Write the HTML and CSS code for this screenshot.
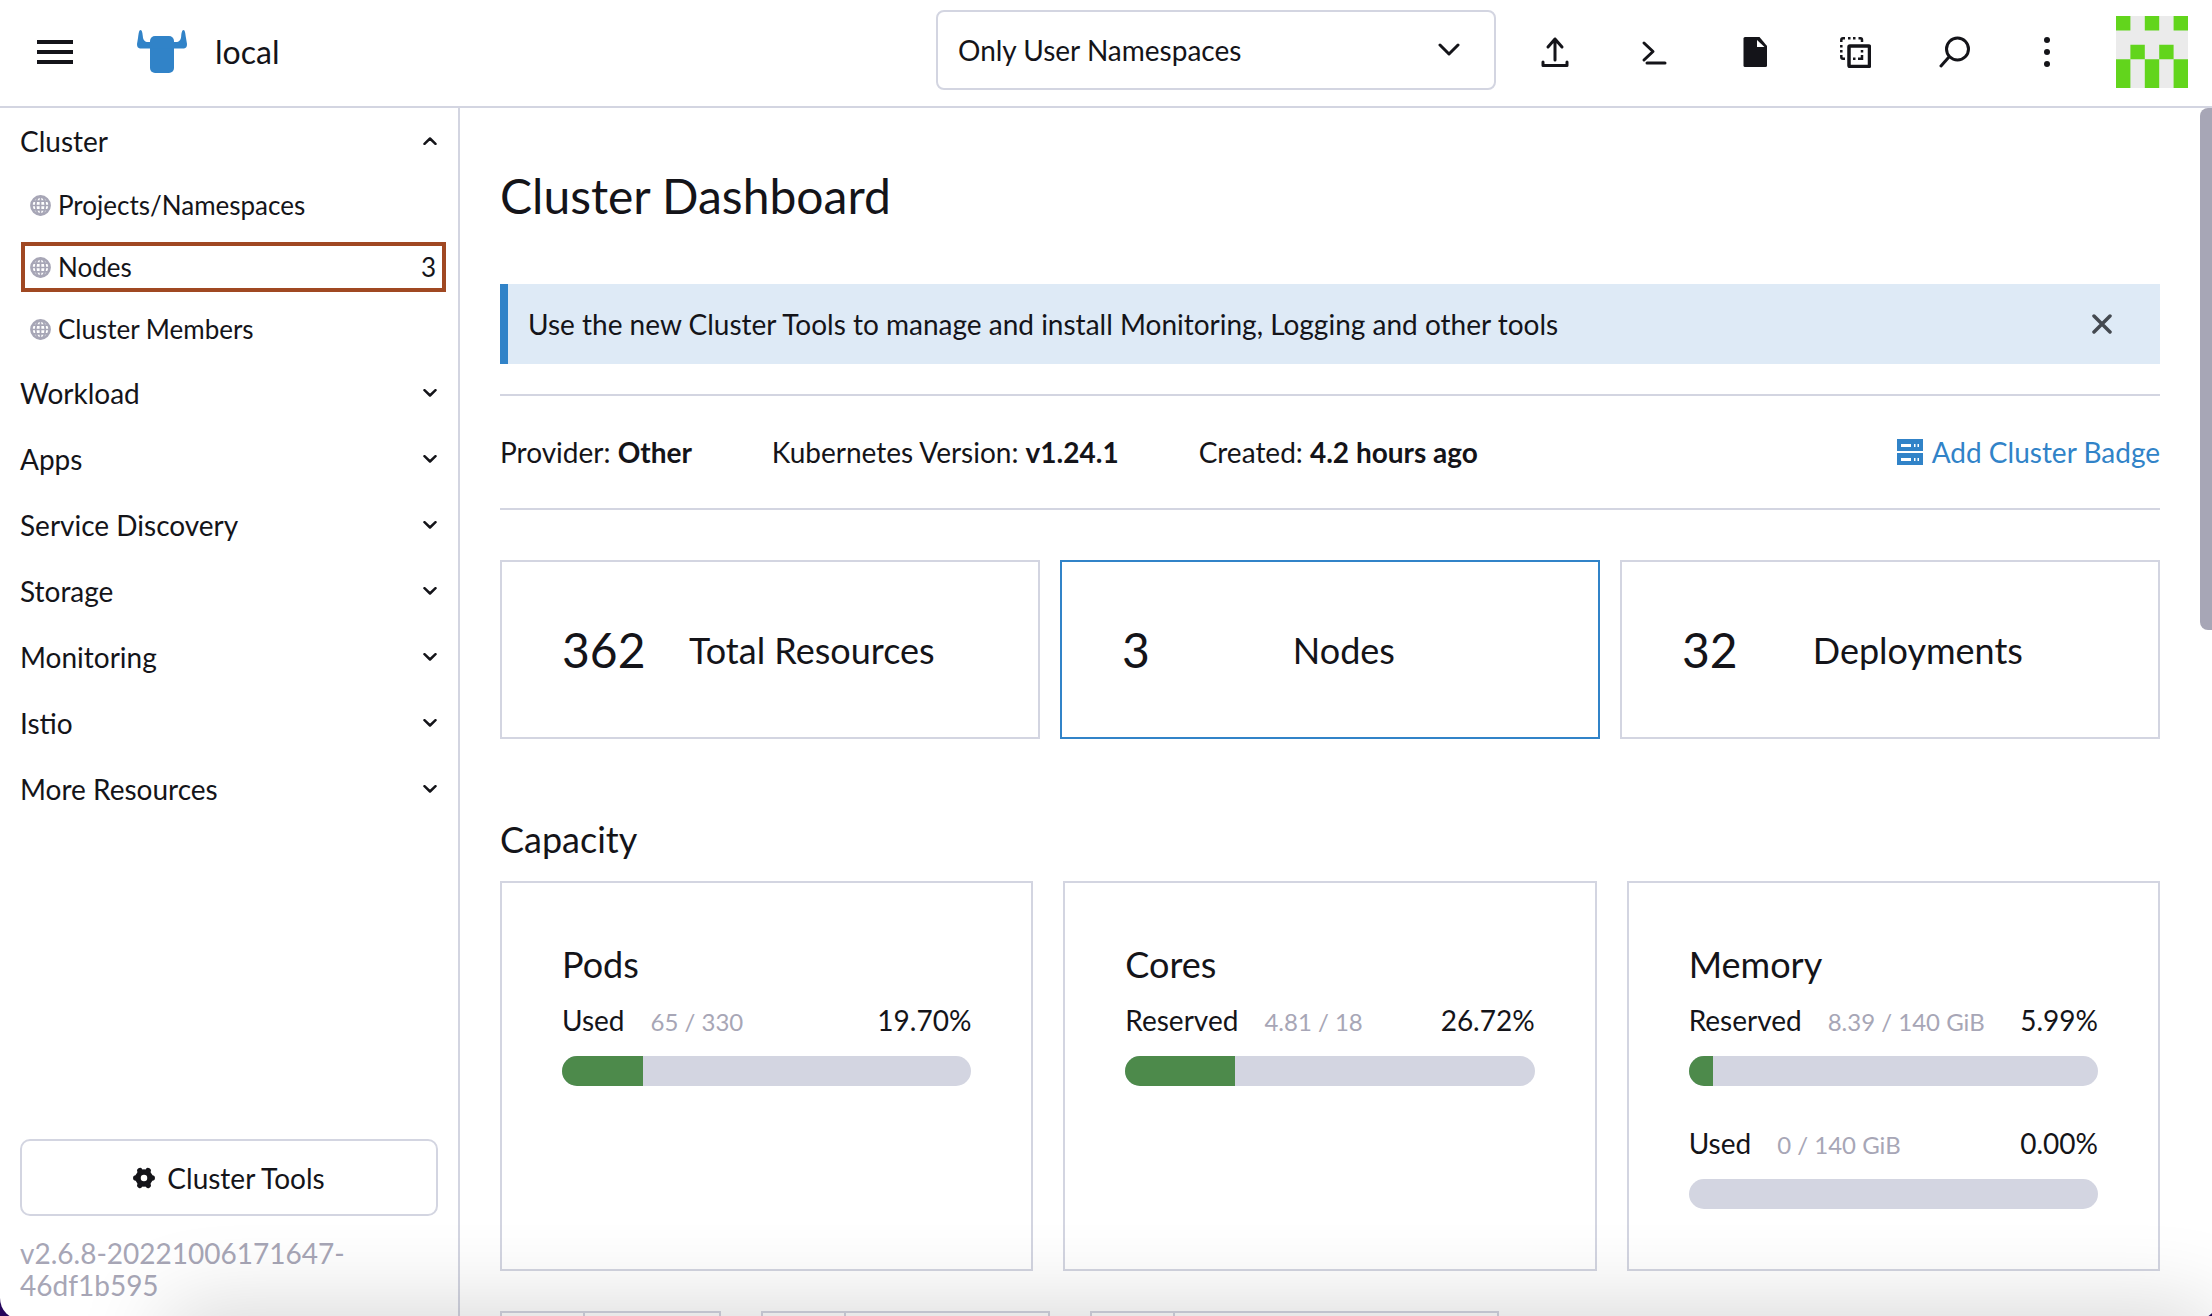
FILE: index.html
```html
<!DOCTYPE html>
<html lang="en">
<head>
<meta charset="utf-8">
<title>Cluster Dashboard</title>
<link rel="stylesheet" href="styles.css">
</head>
<body>
<header class="topbar">
  <button class="icon-btn menu-btn" aria-label="Menu"><svg width="36" height="24" viewBox="0 0 36 24"><path d="M0 2H36M0 12H36M0 22H36" stroke="currentColor" stroke-width="4"/></svg></button>
  <a class="brand" href="#">
    <svg width="50" height="44" viewBox="0 0 50 44" fill="#3183c8"><rect x="13" y="6" width="24" height="37" rx="5"/><path d="M3.500 0C5 0 5.500 3 5.800 6C6 10 8 12 11 12H39C42 12 44 10 44.200 6C44.500 3 45 0 46.500 0C48 0 48.300 3 49 8L50 14C50 17 49 18 47 18.500H3C1 18 0 17 0 14L1 8C1.700 3 2 0 3.500 0Z"/></svg>
    <span>local</span>
  </a>
  <button class="ns-select" aria-haspopup="listbox"><span>Only User Namespaces</span><svg width="22" height="14" viewBox="0 0 22 14"><path d="M2 2L11 11L20 2" fill="none" stroke="currentColor" stroke-width="3" stroke-linecap="round" stroke-linejoin="round"/></svg></button>
  <nav class="tools" aria-label="Tools">
    <button class="icon-btn" aria-label="Import YAML"><svg width="32" height="32" viewBox="0 0 32 32" fill="none" stroke="currentColor" stroke-width="3" stroke-linecap="round" stroke-linejoin="round"><path d="M16 24V3M9 11L16 3L23 11M4 26V29.500H28V26"/></svg></button>
    <button class="icon-btn" aria-label="Kubectl shell"><svg width="32" height="32" viewBox="0 0 32 32" fill="none" stroke="currentColor" stroke-width="3" stroke-linecap="round" stroke-linejoin="round"><path d="M5 7L14 15.500L5 24M8 27H26"/></svg></button>
    <button class="icon-btn" aria-label="Download KubeConfig"><svg width="32" height="32" viewBox="0 0 32 32" fill="currentColor"><path d="M6 1H20.500L28 10V29.500Q28 31 26.500 31H6Q4.500 31 4.500 29.500V2.500Q4.500 1 6 1Z"/><path fill="#fff" d="M18 4L25.500 11H18Z"/></svg></button>
    <button class="icon-btn" aria-label="Copy KubeConfig"><svg width="32" height="32" viewBox="0 0 32 32" fill="none" stroke="currentColor"><path stroke-width="2.500" d="M2.300 6V4Q2.300 2.300 4 2.300H6M9 2.300H11.500M14 2.300H16.500M19.500 2.300H21.500Q23 2.300 23 4V6M2.300 9V11.500M2.300 14V16.500M2.300 19V21Q2.300 22.700 4 22.700H6M23 14V16.500M23 19V22.700H19M14 22.700H16.500"/><rect x="10" y="10" width="20.500" height="20.500" rx="1" stroke-width="3.500"/></svg></button>
    <button class="icon-btn" aria-label="Resource search"><svg width="32" height="32" viewBox="0 0 32 32" fill="none" stroke="currentColor" stroke-width="3" stroke-linecap="round"><circle cx="18.500" cy="13" r="11"/><path d="M9.500 21.500L2 30"/></svg></button>
    <button class="icon-btn more-btn" aria-label="More"><svg width="6" height="32" viewBox="0 0 6 32" fill="currentColor"><circle cx="3" cy="4" r="3"/><circle cx="3" cy="16" r="3"/><circle cx="3" cy="28" r="3"/></svg></button>
  </nav>
  <button class="icon-btn avatar" aria-label="User"><svg width="72" height="72" viewBox="0 0 5 5"><path fill="#ebebeb" d="M0 0H5V5H0Z"/><path fill="#62d51c" d="M0 0H1V1H0ZM2 0H3V1H2ZM4 0H5V1H4ZM1 2H2V3H1ZM3 2H4V3H3ZM0 3H1V5H0ZM2 3H3V5H2ZM4 3H5V5H4Z"/></svg></button>
</header>

<svg class="defs" aria-hidden="true">
  <symbol id="chev" viewBox="0 0 14 8"><path d="M1.500 1.200L7 6.500L12.500 1.200" fill="none" stroke="currentColor" stroke-width="2.500" stroke-linecap="round" stroke-linejoin="round"/></symbol>
  <symbol id="globe" viewBox="0 0 22 22"><g fill="none" stroke="currentColor"><circle cx="11" cy="11" r="9.500" stroke-width="2.800"/><ellipse cx="11" cy="11" rx="5" ry="9.500" stroke-width="1.800"/><path stroke-width="1.800" d="M11 1V21M1 11H21M3 6.500H19M3 15.500H19"/></g></symbol>
</svg>

<div class="layout">
  <aside class="sidebar">
    <nav class="groups" aria-label="Cluster navigation">
      <button class="group" aria-expanded="true">Cluster<svg class="chev up"><use href="#chev"/></svg></button>
      <a class="item" href="#"><svg class="globe"><use href="#globe"/></svg>Projects/Namespaces</a>
      <a class="item marked" href="#"><svg class="globe"><use href="#globe"/></svg>Nodes<span class="count">3</span></a>
      <a class="item" href="#"><svg class="globe"><use href="#globe"/></svg>Cluster Members</a>
      <button class="group">Workload<svg class="chev"><use href="#chev"/></svg></button>
      <button class="group">Apps<svg class="chev"><use href="#chev"/></svg></button>
      <button class="group">Service Discovery<svg class="chev"><use href="#chev"/></svg></button>
      <button class="group">Storage<svg class="chev"><use href="#chev"/></svg></button>
      <button class="group">Monitoring<svg class="chev"><use href="#chev"/></svg></button>
      <button class="group">Istio<svg class="chev"><use href="#chev"/></svg></button>
      <button class="group">More Resources<svg class="chev"><use href="#chev"/></svg></button>
    </nav>
    <div class="side-foot">
      <button class="cluster-tools"><svg width="22" height="22" viewBox="0 0 22 22"><g fill="none" stroke="currentColor"><circle cx="11" cy="11" r="6" stroke-width="5.500"/><path stroke-width="5.500" stroke-linecap="round" d="M2.800 11H4M18 11H19.200M6.900 3.600L7.500 4.600M14.500 17.400L15.100 18.400M15.100 3.600L14.500 4.600M7.500 17.400L6.900 18.400"/></g></svg>Cluster Tools</button>
      <div class="version">v2.6.8-20221006171647-46df1b595</div>
    </div>
  </aside>

  <main class="main">
    <h1 class="title">Cluster Dashboard</h1>
    <div class="banner"><span>Use the new Cluster Tools to manage and install Monitoring, Logging and other tools</span>
      <button class="icon-btn close" aria-label="Close"><svg width="20" height="20" viewBox="0 0 20 20"><path d="M2 2L18 18M18 2L2 18" stroke="currentColor" stroke-width="3.500" stroke-linecap="round"/></svg></button>
    </div>
    <div class="glance">
      <span>Provider: <b>Other</b></span>
      <span>Kubernetes Version: <b>v1.24.1</b></span>
      <span>Created: <b>4.2 hours ago</b></span>
      <a class="badge-link" href="#"><svg width="26" height="26" viewBox="0 0 26 26"><path fill="currentColor" fill-rule="evenodd" d="M0 0H26V12H0ZM4 5V8H14V5ZM17 5V8H18.500V5ZM20.500 5V8H22V5ZM0 14H26V26H0ZM4 19V22H14V19ZM17 19V22H18.500V19ZM20.500 19V22H22V19Z"/></svg>Add Cluster Badge</a>
    </div>
    <section class="counts">
      <a class="count-card" href="#"><span class="num">362</span><span class="label">Total Resources</span></a>
      <a class="count-card active" href="#"><span class="num">3</span><span class="label">Nodes</span></a>
      <a class="count-card" href="#"><span class="num">32</span><span class="label">Deployments</span></a>
    </section>
    <h2 class="subtitle">Capacity</h2>
    <section class="capacity">
      <article class="gauge-card">
        <h3>Pods</h3>
        <div class="gauge"><div class="gauge-row"><span>Used</span><small>65 / 330</small><span class="pct">19.70%</span></div><div class="bar"><div class="fill" style="width:19.7%"></div></div></div>
      </article>
      <article class="gauge-card">
        <h3>Cores</h3>
        <div class="gauge"><div class="gauge-row"><span>Reserved</span><small>4.81 / 18</small><span class="pct">26.72%</span></div><div class="bar"><div class="fill" style="width:26.72%"></div></div></div>
      </article>
      <article class="gauge-card">
        <h3>Memory</h3>
        <div class="gauge"><div class="gauge-row"><span>Reserved</span><small>8.39 / 140 GiB</small><span class="pct">5.99%</span></div><div class="bar"><div class="fill" style="width:5.99%"></div></div></div>
        <div class="gauge"><div class="gauge-row"><span>Used</span><small>0 / 140 GiB</small><span class="pct">0.00%</span></div><div class="bar"></div></div>
      </article>
    </section>
    <section class="services">
      <div class="service s1"><i></i></div>
      <div class="service s2"><i></i></div>
      <div class="service s3"><i></i></div>
    </section>
  </main>
</div>
<div class="scroll-thumb"></div>
<div class="edge-shade"></div>
<div class="window-corners"></div>
</body>
</html>
```

FILE: styles.css
```css
:root {
  --ink: #141419;
  --line: #d3d5e1;
  --muted: #a7a6b6;
  --blue: #3183c8;
}
* { box-sizing: border-box; }
body {
  margin: 0;
  height: 100vh;
  overflow: hidden;
  display: flex;
  flex-direction: column;
  background: #fff;
  color: var(--ink);
  font: 28px/32px Lato, "Liberation Sans", sans-serif;
}
button { font: inherit; color: inherit; background: none; border: 0; padding: 0; text-align: left; }
a { color: inherit; text-decoration: none; }
svg { display: block; flex: none; }
h1, h2, h3 { margin: 0; font-weight: 400; }
.defs { position: absolute; width: 0; height: 0; }

.topbar {
  flex: none;
  height: 108px;
  display: flex;
  align-items: center;
  border-bottom: 2px solid var(--line);
  padding: 0 24px 2px 37px;
}
.brand { display: flex; align-items: center; gap: 28px; margin-left: 64px; font-size: 32px; }
.ns-select {
  width: 560px;
  height: 80px;
  margin-left: auto;
  margin-bottom: 4px;
  padding: 0 34px 0 20px;
  border: 2px solid var(--line);
  border-radius: 8px;
  display: flex;
  align-items: center;
  justify-content: space-between;
}
.tools { display: flex; align-items: center; gap: 68px; margin: 0 66px 0 43px; }
.icon-btn { flex: none; }
.more-btn { margin-left: 5px; }

.layout { flex: 1; min-height: 0; display: flex; }
.sidebar {
  flex: none;
  width: 460px;
  border-right: 2px solid var(--line);
  display: flex;
  flex-direction: column;
  justify-content: space-between;
  padding-bottom: 15px;
}
.groups { display: flex; flex-direction: column; }
.group {
  height: 66px;
  padding: 0 21px 0 20px;
  display: flex;
  align-items: center;
  justify-content: space-between;
}
.chev { width: 14px; height: 8px; }
.up { transform: rotate(180deg); }
.item {
  height: 50px;
  margin: 6px 12px 6px 21px;
  padding: 0 10px 0 9px;
  display: flex;
  align-items: center;
  gap: 7px;
  font-size: 26px;
}
.marked { outline: 4px solid #a04822; outline-offset: -4px; }
.globe { width: 21px; height: 21px; color: var(--muted); }
.count { margin-left: auto; }
.side-foot { padding: 0 20px; }
.cluster-tools {
  width: 100%;
  height: 77px;
  border: 2px solid var(--line);
  border-radius: 10px;
  display: flex;
  align-items: center;
  justify-content: center;
  gap: 12px;
}
.version { margin-top: 21px; color: var(--muted); width: 360px; }

.main { flex: 1; min-width: 0; overflow: hidden; padding: 56px 52px 0 40px; }
.title { font-size: 48px; line-height: 64px; }
.banner {
  margin-top: 56px;
  height: 80px;
  padding: 0 48px 0 20px;
  border-left: 8px solid var(--blue);
  background: #deeaf6;
  display: flex;
  align-items: center;
  justify-content: space-between;
}
.close { color: #444950; }
.glance {
  margin-top: 30px;
  height: 116px;
  border: solid var(--line);
  border-width: 2px 0;
  display: flex;
  align-items: center;
  gap: 80px;
}
.badge-link { margin-left: auto; display: flex; align-items: center; gap: 9px; color: var(--blue); }
.counts { margin-top: 50px; display: grid; grid-template-columns: repeat(3, 1fr); gap: 20px; }
.count-card {
  height: 179px;
  padding: 0 60px;
  border: 2px solid var(--line);
  display: flex;
  align-items: center;
}
.active { border-color: var(--blue); }
.num { font-size: 48px; }
.label { font-size: 36px; margin: 0 auto; }
.subtitle { margin-top: 78px; font-size: 36px; line-height: 44px; }
.capacity { margin-top: 20px; display: grid; grid-template-columns: repeat(3, 1fr); gap: 30px; }
.gauge-card { padding: 60px; border: 2px solid var(--line); }
.gauge-card h3 { font-size: 36px; line-height: 42px; margin-bottom: 18px; }
.gauge + .gauge { margin-top: 40px; }
.gauge-row { display: flex; align-items: baseline; height: 36px; line-height: 34px; }
.gauge-row small { font-size: 24px; color: var(--muted); margin-left: 26px; }
.pct { margin-left: auto; }
.bar { margin-top: 17px; height: 30px; border-radius: 15px; background: var(--line); overflow: hidden; }
.fill { height: 100%; background: #4d8a4b; }
.services { margin-top: 40px; display: flex; gap: 40px; }
.service { height: 84px; border: 2px solid var(--line); display: flex; }
.service i { width: 83px; border-right: 2px solid var(--line); }
.s1 { width: 221px; }
.s2 { width: 289px; }
.s3 { width: 409px; }

.scroll-thumb { position: fixed; right: 0; top: 108px; width: 12px; height: 522px; border-radius: 8px 0 0 8px; background: var(--muted); }
.edge-shade { position: fixed; left: 170px; right: 0; bottom: -80px; height: 80px; box-shadow: 0 0 90px 4px rgba(0, 0, 0, .18); pointer-events: none; }
.window-corners { position: fixed; inset: -40px -6px -4px 0; border-radius: 0 0 22px 22px; box-shadow: 0 0 0 20px #26065c; pointer-events: none; }
```
